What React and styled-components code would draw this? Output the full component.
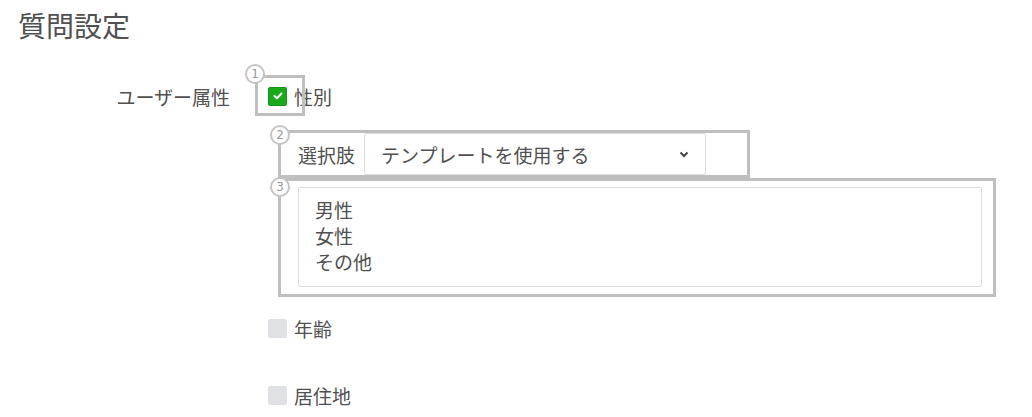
import React from "react";
import styled, { createGlobalStyle } from "styled-components";

const GlobalStyle = createGlobalStyle`
  html, body {
    margin: 0;
    background: #fff;
  }
  body {
    font-family: "Noto Sans CJK JP", "Noto Sans", sans-serif;
    font-weight: 400;
    color: #505050;
  }
`;

const Page = styled.div`
  width: 1032px;
  height: 417px;
  box-sizing: border-box;
  padding: 8px 0 0 18px;
  overflow: hidden;
`;

const Title = styled.h1`
  margin: 0;
  font-size: 28px;
  line-height: 34px;
  font-weight: 400;
  color: #505050;
`;

const Form = styled.div`
  display: grid;
  grid-template-columns: 212px 1fr;
  column-gap: 38px;
  margin-top: 44px;
`;

const FieldLabel = styled.div`
  text-align: right;
  font-size: 19px;
  line-height: 20px;
  padding-top: 1px;
`;

const CheckList = styled.div`
  display: flex;
  flex-direction: column;
`;

const CheckItem = styled.div`
  position: relative;
  margin-top: ${(p) => p.$gap || 0}px;
`;

const CheckRow = styled.label`
  display: flex;
  align-items: center;
  gap: 7px;
  height: 20px;
  font-size: 19px;
`;

const Box = styled.span`
  width: 19px;
  height: 19px;
  box-sizing: border-box;
  border-radius: 2px;
  flex-shrink: 0;
  display: flex;
  align-items: center;
  justify-content: center;
  background: ${(p) => (p.$checked ? "#1aa91c" : "#dfe1e4")};
  border: 1px solid ${(p) => (p.$checked ? "#15941a" : "#dfe1e4")};
`;

const Options = styled.div`
  margin: 24px 0 0 10px;
  display: flex;
  flex-direction: column;
`;

const Frame = styled.div`
  position: relative;
  box-sizing: border-box;
  border: 3px solid #bfbfbf;
`;

const CheckFrame = styled(Frame)`
  position: absolute;
  left: -13px;
  top: -11px;
  width: 50px;
  height: 41px;
  pointer-events: none;
`;

const ChoiceFrame = styled(Frame)`
  width: 472px;
  height: 48px;
  display: flex;
  align-items: stretch;
  padding-left: 17px;
`;

const ListFrame = styled(Frame)`
  width: 718px;
  padding: 6px 11px 7px 17px;
`;

const Marker = styled.span`
  position: absolute;
  left: ${(p) => p.$x}px;
  top: ${(p) => p.$y}px;
  width: 20px;
  height: 20px;
  box-sizing: border-box;
  border: 2px solid #c4c4c4;
  border-radius: 50%;
  background: #fff;
  display: flex;
  align-items: center;
  justify-content: center;
  font-family: "DejaVu Sans", sans-serif;
  font-size: 12px;
  color: #999;
  line-height: 1;
`;

const ChoiceLabel = styled.span`
  width: 66px;
  flex-shrink: 0;
  display: flex;
  align-items: center;
  font-size: 19px;
`;

const Select = styled.div`
  width: 342px;
  box-sizing: border-box;
  border: 1px solid #ddd;
  border-radius: 2px;
  display: flex;
  align-items: center;
  justify-content: space-between;
  padding: 0 16px;
  font-size: 19px;
  background: #fff;
`;

const TextArea = styled.textarea`
  display: block;
  width: 100%;
  height: 100px;
  box-sizing: border-box;
  border: 1px solid #ddd;
  border-radius: 2px;
  padding: 9px 16px;
  font-family: "Noto Sans CJK JP", "Noto Sans", sans-serif;
  font-size: 19px;
  line-height: 26px;
  color: #505050;
  resize: none;
  outline: none;
  overflow: hidden;
`;

const Check = () => (
  <svg width="10" height="8" viewBox="0 0 10 8">
    <polyline
      points="1.5,4 4,6.3 8.5,1.5"
      fill="none"
      stroke="#fff"
      strokeWidth="2"
      strokeLinecap="round"
      strokeLinejoin="round"
    />
  </svg>
);

const Chevron = () => (
  <svg width="10" height="7" viewBox="0 0 10 7">
    <polyline
      points="1.5,1.5 5,5 8.5,1.5"
      fill="none"
      stroke="#444"
      strokeWidth="2"
    />
  </svg>
);

const attributes = [
  { name: "性別", checked: true },
  { name: "年齢", checked: false, gap: 21 },
  { name: "居住地", checked: false, gap: 47 },
];

export default function App() {
  return (
    <Page>
      <GlobalStyle />
      <Title>質問設定</Title>
      <Form>
        <FieldLabel>ユーザー属性</FieldLabel>
        <CheckList>
          {attributes.map((item) => (
            <CheckItem key={item.name} $gap={item.gap}>
              <CheckRow>
                <Box $checked={item.checked}>{item.checked && <Check />}</Box>
                {item.name}
              </CheckRow>
              {item.checked && (
                <>
                  <CheckFrame>
                    <Marker $x={-13} $y={-14}>1</Marker>
                  </CheckFrame>
                  <Options>
                    <ChoiceFrame>
                      <Marker $x={-11} $y={-8}>2</Marker>
                      <ChoiceLabel>選択肢</ChoiceLabel>
                      <Select>
                        テンプレートを使用する
                        <Chevron />
                      </Select>
                    </ChoiceFrame>
                    <ListFrame>
                      <Marker $x={-11} $y={-4}>3</Marker>
                      <TextArea readOnly defaultValue={"男性\n女性\nその他"} />
                    </ListFrame>
                  </Options>
                </>
              )}
            </CheckItem>
          ))}
        </CheckList>
      </Form>
    </Page>
  );
}
